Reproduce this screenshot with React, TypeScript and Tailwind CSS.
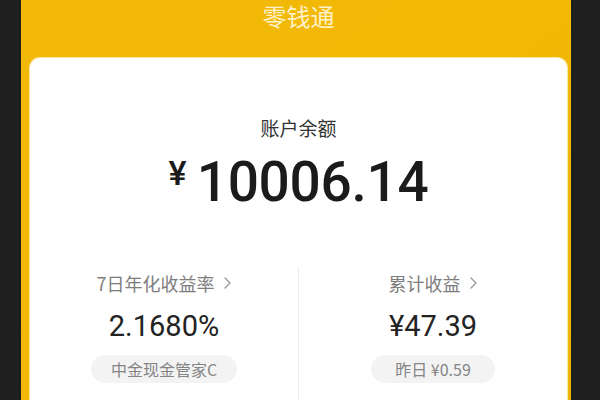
import React from "react";

const Chevron: React.FC = () => (
  <svg width="9" height="14" viewBox="0 0 9 14" className="ml-[8px]" fill="none">
    <path d="M2 2l5 5-5 5" stroke="#9a9a9a" strokeWidth="1.4" strokeLinecap="round" strokeLinejoin="round" />
  </svg>
);

interface StatProps {
  label: string;
  value: string;
  tag: string;
  tagPad: string;
}

const Stat: React.FC<StatProps> = ({ label, value, tag, tagPad }) => (
  <div className="flex flex-col items-center">
    <div className="flex items-center h-[24px] text-[18px] leading-[24px] text-[#7d7d7d]">
      <span>{label}</span>
      <Chevron />
    </div>
    <div className="mt-[13px] h-[36px] text-[29px] leading-[36px] text-[#222] font-[Roboto,'Noto_Sans_CJK_SC',sans-serif]">
      {value}
    </div>
    <div className={`mt-[11px] h-[28px] flex items-center rounded-full bg-[#f3f3f3] text-[16px] text-[#858585] ${tagPad}`}>
      {tag}
    </div>
  </div>
);

export default function App() {
  return (
    <div className="w-[600px] h-[400px] overflow-hidden bg-[#1f1f1f] flex font-['Noto_Sans_CJK_SC','Noto_Sans',sans-serif]">
      <div className="ml-[21px] w-[550px] h-full flex flex-col pl-[8px] pr-[3px] bg-gradient-to-br from-[#f3b908] via-[#f2b806] to-[#efb304]">
        {/* header title */}
        <div className="h-[57px] shrink-0 flex justify-center pt-[2px]">
          <span className="text-[24px] leading-[28px] text-[#fdf1c8]">零钱通</span>
        </div>

        {/* balance card */}
        <div className="flex-1 bg-white rounded-t-[11px] border-t border-x border-[#fbe6a0] flex flex-col items-center">
          <div className="mt-[57px] text-[19px] leading-[26px] text-[#333]">账户余额</div>
          <div className="mt-[11px] h-[60px] flex items-start font-[Roboto,sans-serif] text-[#1b1b1b]">
            <span className="text-[34px] leading-[60px] font-medium -mt-[9px] mr-[10px]">¥</span>
            <span className="text-[55px] leading-[60px] font-medium tracking-[-0.3px]">10006.14</span>
          </div>

          <div className="mt-[55px] w-full grid grid-cols-[1fr_1px_1fr]">
            <div className="pt-[4px]">
              <Stat label="7日年化收益率" value="2.1680%" tag="中金现金管家C" tagPad="px-[20px]" />
            </div>
            <div className="bg-[#ededed] h-[140px]" />
            <div className="pt-[4px]">
              <Stat label="累计收益" value="¥47.39" tag="昨日 ¥0.59" tagPad="px-[24px]" />
            </div>
          </div>
        </div>
      </div>
    </div>
  );
}
